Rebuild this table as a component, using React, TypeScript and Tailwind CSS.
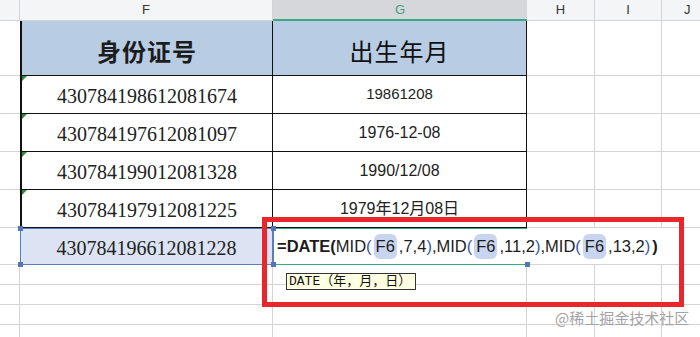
import React from "react";

const sans = { fontFamily: '"Liberation Sans", Arial, "Noto Sans CJK SC", sans-serif' };
const serif = { fontFamily: '"Liberation Serif", "Times New Roman", "Noto Sans CJK SC", serif' };
const cjk = { fontFamily: '"Noto Sans CJK SC", "Liberation Serif", serif' };

const rows = [
  { id: "430784198612081674", date: "19861208", size: "text-[15px]" },
  { id: "430784197612081097", date: "1976-12-08", size: "text-[16px]" },
  { id: "430784199012081328", date: "1990/12/08", size: "text-[16px]" },
  { id: "430784197912081225", date: "1979年12月08日", size: "text-[16px]" },
];

function Ref() {
  return <span className="mx-[2px] px-[2px] rounded-[6px] bg-[#c9d5ee]">F6</span>;
}

function Handle({ className }: { className: string }) {
  return <div className={"absolute w-[5px] h-[5px] bg-[#5574b9] " + className} />;
}

export default function App() {
  return (
    <div className="relative w-[700px] h-[337px] overflow-hidden bg-white text-[#1c1c1c]" style={sans}>
      {/* column letters */}
      <div className="flex h-[21px] text-[13px] text-[#333]">
        <div className="w-[20px] bg-[#f4f5f7] border-r border-b border-[#d3d4d8]" />
        <div className="w-[253px] bg-[#f4f5f7] border-r border-b border-[#d3d4d8] flex items-center justify-center">F</div>
        <div className="w-[254px] bg-[#d6d7db] border-b-2 border-[#3aa882] flex items-center justify-center text-[#3f9e7c]">G</div>
        <div className="w-[68px] bg-[#f4f5f7] border-r border-b border-[#d3d4d8] flex items-center justify-center">H</div>
        <div className="w-[67px] bg-[#f4f5f7] border-r border-b border-[#d3d4d8] flex items-center justify-center">I</div>
        <div className="flex-1 bg-[#f4f5f7] border-b border-[#d3d4d8] flex items-center pl-[22px]">J</div>
      </div>

      {/* header row */}
      <div className="flex h-[55px]">
        <div className="w-[20px] border-b border-[#d4d4d4]" />
        <div className="w-[253px] bg-[#b8cce4] border-l-2 border-r border-b border-[#111] flex items-center justify-center pt-[6px] text-[24px] font-bold tracking-[1px]" style={cjk}>
          身份证号
        </div>
        <div className="w-[254px] bg-[#b8cce4] border-r border-b border-[#111] flex items-center justify-center pt-[6px] text-[24px] tracking-[1px] text-[#111]" style={cjk}>
          出生年月
        </div>
        <div className="w-[68px] border-r border-b border-[#d4d4d4]" />
        <div className="w-[67px] border-r border-b border-[#d4d4d4]" />
        <div className="flex-1 border-b border-[#d4d4d4]" />
      </div>

      {/* data rows */}
      {rows.map((r) => (
        <div key={r.id} className="flex h-[38px]">
          <div className="w-[20px] border-b border-[#d4d4d4]" />
          <div className="relative w-[253px] border-l-2 border-r border-b border-[#111] flex items-center justify-center pt-[3px] text-[20px] text-[#222]" style={serif}>
            <div className="absolute left-0 top-0 w-0 h-0 border-t-[5px] border-r-[5px] border-t-[#2f8a3e] border-r-transparent" />
            {r.id}
          </div>
          <div className={"w-[254px] border-r border-b border-[#111] flex items-center justify-center text-[#222] " + r.size}>
            {r.date}
          </div>
          <div className="w-[68px] border-r border-b border-[#d4d4d4]" />
          <div className="w-[67px] border-r border-b border-[#d4d4d4]" />
          <div className="flex-1 border-b border-[#d4d4d4]" />
        </div>
      ))}

      {/* formula row */}
      <div className="flex h-[37px]">
        <div className="w-[20px] border-b border-[#d4d4d4]" />
        <div className="relative w-[253px] bg-[#dce4f4] border border-[#5a7cc0] flex items-center justify-center pt-[3px] text-[20px] text-[#222]" style={serif}>
          430784196612081228
          <Handle className="-left-[3px] -top-[3px]" />
          <Handle className="-left-[3px] -bottom-[3px]" />
        </div>
        <div className="relative z-10 w-[254px] border-t border-b border-[#3aa882] border-l border-l-[#5a7cc0] flex items-center pl-[3px] text-[16.5px] whitespace-nowrap bg-white">
          <span className="font-bold">=DATE(</span>
          <span>MID</span>
          <span className="text-[#3457a8]">(</span>
          <Ref />
          <span>,7,4</span>
          <span className="text-[#3457a8]">)</span>
          <span>,MID</span>
          <span className="text-[#3457a8]">(</span>
          <Ref />
          <span>,11,2</span>
          <span className="text-[#3457a8]">)</span>
          <span>,MID</span>
          <span className="text-[#3457a8]">(</span>
          <Ref />
          <span>,13,2</span>
          <span className="text-[#3457a8]">)</span>
          <span className="inline-block w-[1px] h-[18px] bg-black mx-[1px]" />
          <span className="font-bold">)</span>
          <Handle className="-left-[3px] -top-[3px]" />
          <Handle className="-left-[3px] -bottom-[3px]" />
          <Handle className="-right-[3px] -bottom-[3px] bg-[#3aa882]" />
        </div>
        <div className="w-[68px] border-b border-[#d4d4d4]" />
        <div className="w-[67px] border-b border-[#d4d4d4]" />
        <div className="flex-1 border-b border-[#d4d4d4]" />
      </div>

      {/* empty rows */}
      {[0, 1, 2, 3].map((i) => (
        <div key={i} className="flex h-[20px]">
          <div className="w-[20px] border-r border-b border-[#d4d4d4]" />
          <div className="w-[253px] border-r border-b border-[#d4d4d4]" />
          <div className="w-[254px] border-r border-b border-[#d4d4d4]" />
          <div className="w-[68px] border-r border-b border-[#d4d4d4]" />
          <div className="w-[67px] border-r border-b border-[#d4d4d4]" />
          <div className="flex-1 border-b border-[#d4d4d4]" />
        </div>
      ))}

      {/* function hint tooltip */}
      <div
        className="absolute left-[286px] top-[273px] h-[17px] pl-[2px] pr-[4px] bg-[#ffffe1] border border-[#333] flex items-center text-[13px] leading-none text-[#111] z-20"
        style={{ fontFamily: '"Liberation Mono", "Noto Sans CJK SC", monospace' }}
      >
        DATE（年，月，日）
      </div>

      {/* red highlight box */}
      <div className="absolute left-[262px] top-[217px] w-[422px] h-[90px] border-[5px] border-[#e8262b] z-20 pointer-events-none" />

      {/* watermark */}
      <div className="absolute left-[555px] top-[307px] text-[15px] text-[#a3a3a3] z-20" style={cjk}>
        @稀土掘金技术社区
      </div>
    </div>
  );
}
